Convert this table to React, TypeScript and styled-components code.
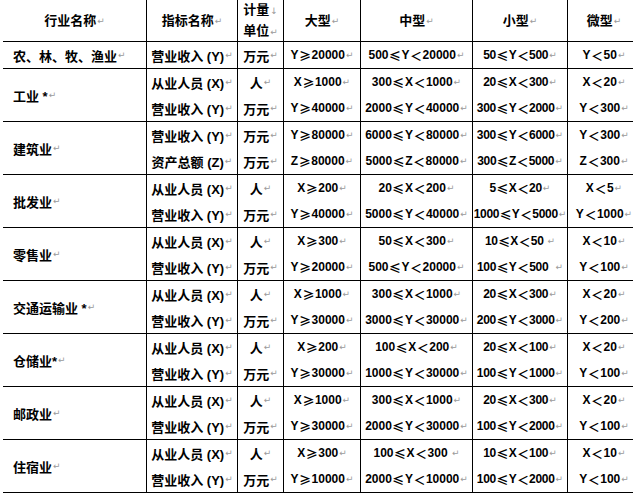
import React from 'react';
import styled, { createGlobalStyle } from 'styled-components';

type Line = [string, string, string, string, string, string];

interface Group {
  name: string;
  lines: Line[];
}

const COLUMNS = '144px 91px 46px 77px 112px 95px 72px';

const GROUPS: Group[] = [
  {
    name: '农、林、牧、渔业',
    lines: [['营业收入 (Y)', '万元', 'Y≥20000', '500≤Y＜20000', '50≤Y＜500', 'Y＜50']],
  },
  {
    name: '工业 *',
    lines: [
      ['从业人员 (X)', '人', 'X≥1000', '300≤X＜1000', '20≤X＜300', 'X＜20'],
      ['营业收入 (Y)', '万元', 'Y≥40000', '2000≤Y＜40000', '300≤Y＜2000', 'Y＜300'],
    ],
  },
  {
    name: '建筑业',
    lines: [
      ['营业收入 (Y)', '万元', 'Y≥80000', '6000≤Y＜80000', '300≤Y＜6000', 'Y＜300'],
      ['资产总额 (Z)', '万元', 'Z≥80000', '5000≤Z＜80000', '300≤Z＜5000', 'Z＜300'],
    ],
  },
  {
    name: '批发业',
    lines: [
      ['从业人员 (X)', '人', 'X≥200', '20≤X＜200', '5≤X＜20', 'X＜5'],
      ['营业收入 (Y)', '万元', 'Y≥40000', '5000≤Y＜40000', '1000≤Y＜5000', 'Y＜1000'],
    ],
  },
  {
    name: '零售业',
    lines: [
      ['从业人员 (X)', '人', 'X≥300', '50≤X＜300', '10≤X＜50 ', 'X＜10'],
      ['营业收入 (Y)', '万元', 'Y≥20000', '500≤Y＜20000', '100≤Y＜500  ', 'Y＜100'],
    ],
  },
  {
    name: '交通运输业 *',
    lines: [
      ['从业人员 (X)', '人', 'X≥1000', '300≤X＜1000', '20≤X＜300', 'X＜20'],
      ['营业收入 (Y)', '万元', 'Y≥30000', '3000≤Y＜30000', '200≤Y＜3000', 'Y＜200'],
    ],
  },
  {
    name: '仓储业*',
    lines: [
      ['从业人员 (X)', '人', 'X≥200', '100≤X＜200', '20≤X＜100', 'X＜20'],
      ['营业收入 (Y)', '万元', 'Y≥30000', '1000≤Y＜30000', '100≤Y＜1000', 'Y＜100'],
    ],
  },
  {
    name: '邮政业',
    lines: [
      ['从业人员 (X)', '人', 'X≥1000', '300≤X＜1000', '20≤X＜300', 'X＜20'],
      ['营业收入 (Y)', '万元', 'Y≥30000', '2000≤Y＜30000', '100≤Y＜2000', 'Y＜100'],
    ],
  },
  {
    name: '住宿业',
    lines: [
      ['从业人员 (X)', '人', 'X≥300', '100≤X＜300 ', '10≤X＜100', 'X＜10'],
      ['营业收入 (Y)', '万元', 'Y≥10000', '2000≤Y＜10000', '100≤Y＜2000', 'Y＜100'],
    ],
  },
];

// split a range like "500≤Y＜20000" so the operators can use the CJK font
const renderValue = (value: string) =>
  value.split(/([≤≥＜])/).map((part, i) =>
    /[≤≥＜]/.test(part) ? <Op key={i}>{part}</Op> : <React.Fragment key={i}>{part}</React.Fragment>
  );

const App: React.FC = () => {
  return (
    <>
      <GlobalStyle />
      <Table>
        <HeaderRow>
          <HeadCell>行业名称<Mark>↵</Mark></HeadCell>
          <HeadCell>指标名称<Mark>↵</Mark></HeadCell>
          <HeadCell $stacked>
            <span>计量<Mark>↓</Mark></span>
            <span>单位<Mark>↵</Mark></span>
          </HeadCell>
          <HeadCell>大型<Mark>↵</Mark></HeadCell>
          <HeadCell>中型<Mark>↵</Mark></HeadCell>
          <HeadCell>小型<Mark>↵</Mark></HeadCell>
          <HeadCell $last>微型<Mark>↵</Mark></HeadCell>
        </HeaderRow>

        {GROUPS.map((group) => (
          <GroupRow key={group.name} $lines={group.lines.length}>
            <NameCell $span={group.lines.length}>
              {group.name}
              <Mark>↵</Mark>
            </NameCell>
            {group.lines.map((line, i) =>
              line.map((value, j) => (
                <Cell key={`${i}-${j}`} $last={j === line.length - 1} $tight={j === 4}>
                  {renderValue(value)}
                  <Mark>↵</Mark>
                </Cell>
              ))
            )}
          </GroupRow>
        ))}

        <GroupRow $lines={2}>
          <NameCell $span={2} />
          {[0, 1, 2, 3, 4, 5].map((j) => (
            <Cell key={j} $last={j === 5} />
          ))}
        </GroupRow>
      </Table>
    </>
  );
};

const GlobalStyle = createGlobalStyle`
  html, body {
    margin: 0;
    padding: 0;
    background: #ffffff;
    overflow: hidden;
  }
  body {
    font-family: "Liberation Sans", "Noto Sans CJK SC", sans-serif;
    color: #000;
  }
`;

const Table = styled.div`
  display: flex;
  flex-direction: column;
  margin-left: 3px;
  width: 637px;
`;

const HeaderRow = styled.div`
  display: grid;
  grid-template-columns: ${COLUMNS};
  height: 42px;
  border-bottom: 1px solid #000;
  box-sizing: border-box;
`;

const HeadCell = styled.div<{ $stacked?: boolean; $last?: boolean }>`
  display: flex;
  flex-direction: ${(p) => (p.$stacked ? 'column' : 'row')};
  align-items: center;
  justify-content: center;
  border-right: ${(p) => (p.$last ? 'none' : '1px solid #000')};
  font-size: 13px;
  font-weight: 700;
  line-height: 20px;
  white-space: nowrap;
`;

const GroupRow = styled.div<{ $lines: number }>`
  display: grid;
  grid-template-columns: ${COLUMNS};
  grid-template-rows: repeat(${(p) => p.$lines}, 26px);
  border-bottom: 1px solid #000;
`;

const NameCell = styled.div<{ $span: number }>`
  grid-row: span ${(p) => p.$span};
  display: flex;
  align-items: center;
  padding-left: 10px;
  border-right: 1px solid #000;
  font-size: 13px;
  font-weight: 700;
  white-space: nowrap;
`;

const Cell = styled.div<{ $last?: boolean; $tight?: boolean }>`
  display: flex;
  align-items: center;
  justify-content: center;
  border-right: ${(p) => (p.$last ? 'none' : '1px solid #000')};
  font-size: 12px;
  font-weight: 700;
  letter-spacing: ${(p) => (p.$tight ? '-0.3px' : '0')};
  white-space: pre;
  overflow: hidden;

  &:nth-child(6n + 2),
  &:nth-child(6n + 3) {
    font-size: 13px;
  }
`;

const Op = styled.span`
  font-family: "Noto Sans CJK SC", sans-serif;
  font-size: 12px;
  margin: 0 0.5px;
`;

const Mark = styled.span`
  font-family: "DejaVu Sans", sans-serif;
  font-size: 9px;
  font-weight: 400;
  color: #9a9a9a;
  margin-left: 1px;
  letter-spacing: 0;
`;

export default App;
